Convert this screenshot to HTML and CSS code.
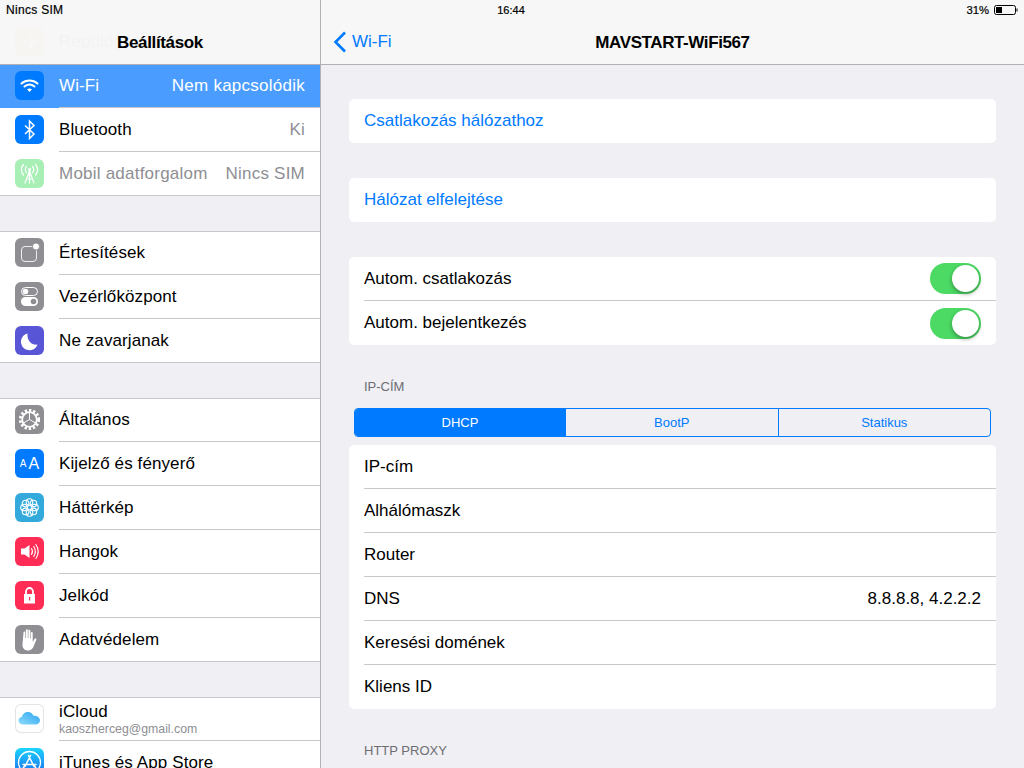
FILE: index.html
```html
<!DOCTYPE html>
<html lang="hu">
<head>
<meta charset="utf-8">
<title>Beállítások</title>
<link rel="stylesheet" href="styles.css">
</head>
<body>
<div class="app">
  <div class="status">
    <span class="status-left">Nincs SIM</span>
    <span class="status-time">16:44</span>
    <span class="status-right">31%
      <svg class="battery" width="24" height="10" viewBox="0 0 24 10"><rect x="0.5" y="0.5" width="21" height="9" rx="2" fill="none" stroke="#000" stroke-width="1"/><rect x="2" y="2" width="6" height="6" fill="#000"/><rect x="22.5" y="3.5" width="1" height="3" fill="#000"/></svg>
    </span>
  </div>
  <aside class="side">
    <header class="side-head">Beállítások</header>
    <div class="side-scroll">
      <section class="group first">
        <div class="row ghost">
          <div class="ico orange"><svg viewBox="0 0 29 29"><path d="M5 14.500l4-.3 2-3h1.400l-.8 3 4-.3-2-7h2l4.500 7 3.400.3c1 .1 1 .6 0 .7l-3.400.3-4.500 7h-2l2-7-4-.3.8 3h-1.400l-2-3z" fill="#fff"/></svg></div>
          <div class="row-body"><span>Repülőgép mód</span><span class="ghost-switch"></span></div>
        </div>
        <div class="row selected">
          <div class="ico blue"><svg viewBox="0 0 29 29"><g fill="none" stroke="#fff" stroke-width="2" stroke-linecap="round"><path d="M6.500 12.500c4.600-4 11.400-4 16 0"/><path d="M9.500 15.500c3-2.500 7-2.500 10 0"/></g><path d="M12 18.200c1.500-1.100 3.500-1.100 5 0l-2.500 2.800z" fill="#fff"/></svg></div>
          <div class="row-body"><span>Wi-Fi</span><span class="value">Nem kapcsolódik</span></div>
        </div>
        <div class="row">
          <div class="ico blue"><svg viewBox="0 0 29 29"><path d="M10 10.500l9 8.500-4.500 4.500V6l4.500 4.500-9 8.500" fill="none" stroke="#fff" stroke-width="1.500"/></svg></div>
          <div class="row-body"><span>Bluetooth</span><span class="value">Ki</span></div>
        </div>
        <div class="row dim last">
          <div class="ico green"><svg viewBox="0 0 29 29"><g fill="none" stroke="#fff" stroke-width="1.200" stroke-linecap="round"><path d="M14.500 12v12M14.500 12L10 24M14.500 12L19 24M11.500 20h6M12.500 17h4"/><path d="M11.500 7.500c-1.600 1.600-1.600 4.400 0 6M17.500 7.500c1.600 1.600 1.600 4.400 0 6M8.500 5.500c-2.800 3-2.800 7.500 0 10.500M20.500 5.500c2.800 3 2.800 7.500 0 10.500"/></g><circle cx="14.500" cy="10.500" r="1.600" fill="#fff"/></svg></div>
          <div class="row-body"><span>Mobil adatforgalom</span><span class="value">Nincs SIM</span></div>
        </div>
      </section>

      <section class="group">
        <div class="row">
          <div class="ico gray"><svg viewBox="0 0 29 29"><rect x="6.500" y="8.500" width="15" height="15" rx="3.500" fill="none" stroke="#fff" stroke-opacity=".85"/><circle cx="21" cy="8.500" r="3.600" fill="#fff" stroke="#8e8e93" stroke-width="1"/></svg></div>
          <div class="row-body"><span>Értesítések</span></div>
        </div>
        <div class="row">
          <div class="ico gray"><svg viewBox="0 0 29 29"><rect x="6.500" y="5.500" width="16" height="8" rx="4" fill="none" stroke="#fff"/><circle cx="10.500" cy="9.500" r="2.800" fill="#fff"/><rect x="6" y="15" width="17" height="9" rx="4.500" fill="#fff"/><circle cx="18.500" cy="19.500" r="2.800" fill="#8e8e93"/></svg></div>
          <div class="row-body"><span>Vezérlőközpont</span></div>
        </div>
        <div class="row last">
          <div class="ico purple"><svg viewBox="0 0 29 29"><path d="M12.500 7.500a8.500 8.500 0 1 0 10 11c-5.500 1-10.800-4-10-11z" fill="#fff"/></svg></div>
          <div class="row-body"><span>Ne zavarjanak</span></div>
        </div>
      </section>

      <section class="group">
        <div class="row">
          <div class="ico gray"><svg viewBox="0 0 29 29"><circle cx="14.500" cy="14.500" r="9.200" fill="none" stroke="#fff" stroke-width="2.800" stroke-dasharray="2.400 1.850"/><circle cx="14.500" cy="14.500" r="7.300" fill="none" stroke="#fff" stroke-width="1.800"/><path d="M14.500 14.500V8M14.500 14.500l5.500 3.200M14.500 14.500L9 17.700" stroke="#fff" stroke-width="1"/></svg></div>
          <div class="row-body"><span>Általános</span></div>
        </div>
        <div class="row">
          <div class="ico blue aa"><span class="aa-small">A</span><span class="aa-big">A</span></div>
          <div class="row-body"><span>Kijelző és fényerő</span></div>
        </div>
        <div class="row">
          <div class="ico teal"><svg viewBox="0 0 29 29"><g fill="none" stroke="#fff" stroke-width="1.100"><circle cx="14.500" cy="9" r="3.300"/><circle cx="14.500" cy="20" r="3.300"/><circle cx="9" cy="14.500" r="3.300"/><circle cx="20" cy="14.500" r="3.300"/><circle cx="10.600" cy="10.600" r="3.300"/><circle cx="18.400" cy="10.600" r="3.300"/><circle cx="10.600" cy="18.400" r="3.300"/><circle cx="18.400" cy="18.400" r="3.300"/></g></svg></div>
          <div class="row-body"><span>Háttérkép</span></div>
        </div>
        <div class="row">
          <div class="ico pink"><svg viewBox="0 0 29 29"><path d="M6 11.500h3.500l5-3.500v13l-5-3.500H6z" fill="#fff"/><g fill="none" stroke="#fff" stroke-width="1.100" stroke-linecap="round"><path d="M16.500 11.500c1.200 1.800 1.200 4.200 0 6"/><path d="M18.700 9.500c2 3 2 7 0 10"/><path d="M20.900 7.500c2.800 4.300 2.800 9.700 0 14"/></g></svg></div>
          <div class="row-body"><span>Hangok</span></div>
        </div>
        <div class="row">
          <div class="ico pink"><svg viewBox="0 0 29 29"><path d="M11 13V10.500a3.500 3.500 0 0 1 7 0V13" fill="none" stroke="#fff" stroke-width="1.800"/><path d="M9 13h11v9.500H9z" fill="#fff"/><rect x="14" y="16" width="1.200" height="3.500" fill="#ff2d55"/></svg></div>
          <div class="row-body"><span>Jelkód</span></div>
        </div>
        <div class="row last">
          <div class="ico gray"><svg viewBox="0 0 29 29"><path d="M10 8.500c0-1.300 1.800-1.300 1.800 0V14h.6V6.300c0-1.300 1.900-1.300 1.900 0V14h.6V6.800c0-1.300 1.900-1.300 1.900 0V14.500h.6V9c0-1.300 1.800-1.300 1.800 0v9l1.800-3c.7-1.200 2.400-.6 1.800.8l-2.600 6.500c-1 2.500-2.800 4.200-5.600 4.200-3.800 0-5.200-2.300-5.700-5z" fill="#fff" transform="translate(-1.500 -1)"/></svg></div>
          <div class="row-body"><span>Adatvédelem</span></div>
        </div>
      </section>

      <section class="group">
        <div class="row">
          <div class="ico white"><svg viewBox="0 0 29 29"><defs><linearGradient id="cloud" x1="1" y1="0" x2="0" y2="1"><stop offset="0" stop-color="#2aa4f0"/><stop offset="1" stop-color="#8fdcfb"/></linearGradient></defs><path d="M8 20.500c-2.800 0-4.500-1.800-4.500-4 0-2.100 1.500-3.600 3.500-3.800.8-3.400 3.600-4.700 6-4.700 2.600 0 4.600 1.500 5.400 3.700 3.800-.4 6.600 1.900 6.600 4.800 0 2.300-1.800 4-4.300 4z" fill="url(#cloud)"/></svg></div>
          <div class="row-body"><span class="stack"><span>iCloud</span><span class="sub">kaoszherceg@gmail.com</span></span></div>
        </div>
        <div class="row">
          <div class="ico appstore"><svg viewBox="0 0 29 29"><circle cx="14.500" cy="14.500" r="11" fill="none" stroke="#fff" stroke-width="1.300"/><path d="M15.500 7.500L10 18.500M13.500 7.500L19 18.500M8 16.500h13M7.500 21l2-3M21.500 21l-2-3" fill="none" stroke="#fff" stroke-width="1.500" stroke-linecap="round"/></svg></div>
          <div class="row-body"><span>iTunes és App Store</span></div>
        </div>
      </section>
    </div>
  </aside>

  <main class="detail">
    <header class="detail-head">
      <a class="back"><svg width="14" height="22" viewBox="0 0 14 22"><path d="M12 1.500L2.500 11l9.500 9.500" fill="none" stroke="#007aff" stroke-width="2.600"/></svg><span>Wi-Fi</span></a>
      <h1 class="detail-title">MAVSTART-WiFi567</h1>
    </header>
    <div class="detail-body">
      <div class="card"><div class="item link">Csatlakozás hálózathoz</div></div>
      <div class="card"><div class="item link">Hálózat elfelejtése</div></div>
      <div class="card">
        <div class="item"><span>Autom. csatlakozás</span><span class="switch"></span></div>
        <div class="item"><span>Autom. bejelentkezés</span><span class="switch"></span></div>
      </div>
      <div class="label">IP-cím</div>
      <div class="segments">
        <div class="seg active">DHCP</div>
        <div class="seg">BootP</div>
        <div class="seg">Statikus</div>
      </div>
      <div class="card tight">
        <div class="item"><span>IP-cím</span></div>
        <div class="item"><span>Alhálómaszk</span></div>
        <div class="item"><span>Router</span></div>
        <div class="item"><span>DNS</span><span>8.8.8.8, 4.2.2.2</span></div>
        <div class="item"><span>Keresési domének</span></div>
        <div class="item"><span>Kliens ID</span></div>
      </div>
      <div class="label proxy">HTTP Proxy</div>
    </div>
  </main>
</div>
</body>
</html>
```
FILE: styles.css
```css
* { box-sizing: border-box; }
html, body { margin: 0; padding: 0; }
body {
  font-family: "Liberation Sans", Arial, sans-serif;
  font-size: 17px;
  color: #000;
  background: #efeff4;
}
.app {
  position: relative;
  display: flex;
  width: 1024px;
  height: 768px;
  overflow: hidden;
}

/* status bar lies over both panes */
.status {
  position: absolute;
  top: 0; left: 0; right: 0;
  z-index: 5;
  height: 20px;
  padding: 0 6px;
  display: grid;
  grid-template-columns: 1fr auto 1fr;
  align-items: center;
  font-size: 11px;
  line-height: 20px;
  -webkit-text-stroke: 0.2px #000;
}
.status-left { font-size: 12px; letter-spacing: .3px; }
.status-time { padding-right: 2px; }
.status-right {
  display: flex;
  justify-content: flex-end;
  align-items: center;
  gap: 5px;
  font-size: 11.3px;
}

/* sidebar */
.side {
  position: relative;
  flex: 0 0 321px;
  height: 768px;
  background: #efeff4;
  border-right: 1px solid #b2b2b2;
  overflow: hidden;
}
.side-head {
  position: absolute;
  top: 0; left: 0; right: 0;
  z-index: 3;
  height: 65px;
  padding-top: 21px;
  line-height: 44px;
  text-align: center;
  font-weight: bold;
  letter-spacing: -.35px;
  background: rgba(247,247,247,.96);
  border-bottom: 1px solid #b2b2b2;
}
.side-scroll { padding-top: 20px; letter-spacing: .1px; }
.group {
  margin-top: 35px;
  background: #fff;
  box-shadow: inset 0 1px 0 #c8c7cc, inset 0 -1px 0 #c8c7cc;
}
.group.first { margin-top: 0; box-shadow: inset 0 -1px 0 #c8c7cc; }
.row {
  display: flex;
  height: 44px;
  padding-left: 15px;
}
.ico {
  flex: none;
  width: 29px;
  height: 29px;
  margin-top: 7px;
  border-radius: 6px;
  overflow: hidden;
}
.ico svg { display: block; width: 29px; height: 29px; }
.blue { background: #007aff; }
.gray { background: #8e8e93; }
.purple { background: #5856d6; }
.teal { background: #34aadc; }
.pink { background: #ff2d55; }
.orange { background: #ff9500; }
.green { background: #a8efb5; }
.white { background: #fff; box-shadow: inset 0 0 0 1px #e4e4e6; }
.appstore { background: linear-gradient(#1ad5fd, #1d62f0); }
.aa {
  display: flex;
  align-items: center;
  justify-content: center;
  gap: 2px;
  color: #fff;
  line-height: 29px;
}
.aa-small { font-size: 10px; }
.aa-big { font-size: 16px; }
.row-body {
  flex: 1;
  min-width: 0;
  margin-left: 15px;
  padding-right: 15px;
  display: flex;
  justify-content: space-between;
  align-items: center;
  border-bottom: 1px solid #c8c7cc;
  white-space: nowrap;
}
.row.last .row-body { border-bottom: 0; }
.value { color: #8e8e93; letter-spacing: .15px; }
.selected { background: #4a9dff; color: #fff; }
.selected .value { color: #fff; letter-spacing: .25px; }
.dim, .dim .value { color: #8e8e93; letter-spacing: .22px; }
.ghost { opacity: .5; }
.ghost-switch {
  width: 51px;
  height: 31px;
  border: 1px solid #bbb;
  border-radius: 16px;
}
.stack { display: flex; flex-direction: column; margin-top: 4px; line-height: 18px; }
.sub { font-size: 12.3px; letter-spacing: 0; color: #8e8e93; line-height: 17px; }

/* detail */
.detail {
  flex: 1;
  min-width: 0;
  display: flex;
  flex-direction: column;
}
.detail-head {
  position: relative;
  flex: none;
  height: 65px;
  padding-top: 21px;
  background: #f7f7f7;
  border-bottom: 1px solid #b2b2b2;
  text-align: center;
}
.back {
  position: absolute;
  left: 12px;
  top: 20px;
  height: 44px;
  display: flex;
  align-items: center;
  gap: 5px;
  color: #007aff;
}
.detail-title {
  margin: 0;
  font-size: 17px;
  line-height: 44px;
  font-weight: bold;
  letter-spacing: -.4px;
}
.detail-body { padding: 34px 28px 0; }
.card {
  margin-bottom: 35px;
  background: #fff;
  border-radius: 5px;
  overflow: hidden;
}
.card.tight { margin-bottom: 0; }
.item {
  height: 44px;
  margin-left: 15px;
  padding-right: 15px;
  display: flex;
  justify-content: space-between;
  align-items: center;
  border-bottom: 1px solid #c8c7cc;
}
.item:last-child { border-bottom: 0; }
.link { color: #007aff; }
.switch {
  position: relative;
  width: 51px;
  height: 31px;
  border-radius: 16px;
  background: #4cd964;
}
.switch::after {
  content: "";
  position: absolute;
  top: 2px; right: 2px;
  width: 27px;
  height: 27px;
  border-radius: 50%;
  background: #fff;
  box-shadow: 0 2px 4px rgba(0,0,0,.35);
}
.label {
  margin: -1px 15px 0;
  font-size: 13px;
  line-height: 16px;
  color: #6d6d72;
  text-transform: uppercase;
}
.label.proxy { margin-top: 34px; }
.segments {
  display: flex;
  height: 29px;
  margin: 13px 5px 8px;
  border: 1px solid #007aff;
  border-radius: 4px;
  overflow: hidden;
  font-size: 13px;
  color: #007aff;
}
.seg {
  flex: 1;
  display: flex;
  align-items: center;
  justify-content: center;
  border-left: 1px solid #007aff;
}
.seg:first-child { flex: 0 0 210px; border-left: 0; }
.seg.active { background: #007aff; color: #fff; }
```
